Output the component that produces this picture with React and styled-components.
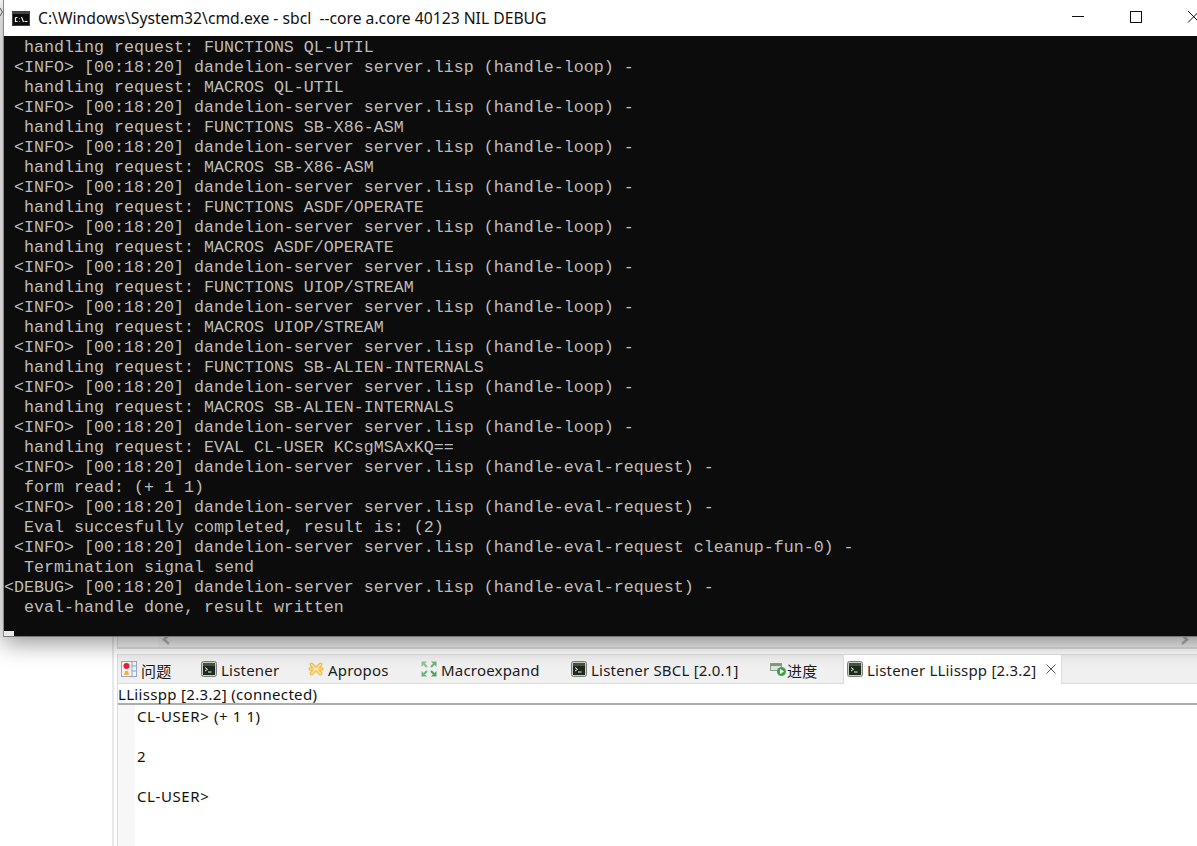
import React from "react";
import styled, { createGlobalStyle } from "styled-components";

const Global = createGlobalStyle`
  html, body { margin: 0; padding: 0; background: #fff; }
  body { font-family: "Noto Sans", "Noto Sans CJK SC", sans-serif; overflow: hidden; }
`;

const Desktop = styled.div`
  position: relative;
  width: 1197px;
  height: 846px;
  overflow: hidden;
  background: #fff;
  display: flex;
`;
const Gutter = styled.div`
  width: 112px;
  flex: none;
  border-right: 2px solid #e8e8e8;
`;
const Workbench = styled.div`
  flex: 1;
  min-width: 0;
  margin-left: 3px;
  display: flex;
  flex-direction: column;
`;
const TopPane = styled.div`
  height: 649px;
  flex: none;
  box-sizing: border-box;
  border-left: 1px solid #dcdcdc;
  border-bottom: 2px solid #dedede;
  background: linear-gradient(90deg, #f6f6f6 0 40px, #f0f0f0 40px);
  display: flex;
  align-items: flex-end;
  justify-content: space-between;
  padding: 0 8px 2px 44px;
  color: #b5b5b5;
`;
const Folder = styled.div`
  margin-top: 5px;
  flex: 1;
  display: flex;
  flex-direction: column;
  border-left: 1px solid #dcdcdc;
`;
const TabBar = styled.div`
  display: flex;
  height: 30px;
  box-sizing: border-box;
  background: #f0f0f0;
  border-top: 1px solid #e2e2e2;
  border-bottom: 1px solid #dcdcdc;
`;
const Tab = styled.div`
  display: flex;
  align-items: center;
  box-sizing: border-box;
  width: ${(p) => p.$w}px;
  height: ${(p) => (p.$active ? 29 : 28)}px;
  padding-left: ${(p) => p.$pad}px;
  gap: ${(p) => p.$gap}px;
  font-size: 15px;
  letter-spacing: 0.2px;
  color: #1c1c1c;
  white-space: nowrap;
  ${(p) =>
    p.$active &&
    `background:#fff; padding-bottom:1px; border-left:1px solid #dcdcdc; border-right:1px solid #dcdcdc; z-index:1;`}
`;
const TabLabel = styled.span`
  position: relative;
  top: 1px;
`;
const TabIcon = styled.svg`
  width: 16px;
  height: 16px;
  flex: none;
`;
const CloseBox = styled.svg`
  width: 10px;
  height: 10px;
  margin-left: 6px;
  flex: none;
`;
const Status = styled.div`
  height: 21px;
  box-sizing: border-box;
  border-bottom: 2px solid #acacac;
  font-size: 15px;
  letter-spacing: 0.32px;
  line-height: 20px;
  color: #111;
  white-space: nowrap;
`;
const ReplArea = styled.div`
  flex: 1;
  display: flex;
`;
const Ruler = styled.div`
  width: 17px;
  flex: none;
  background: #f7f7f7;
`;
const Repl = styled.div`
  padding: 1px 0 0 2px;
  font-size: 15px;
  letter-spacing: 0.6px;
  line-height: 20px;
  color: #111;
  white-space: pre;
`;

const TermWindow = styled.div`
  position: absolute;
  left: 3px;
  top: 0;
  width: 1221px;
  height: 637px;
  box-sizing: border-box;
  border-left: 1px solid #8a8a8a;
  border-bottom: 1px solid #777;
  background: #0c0c0c;
  box-shadow: 0 6px 22px rgba(0, 0, 0, 0.42);
  display: flex;
  flex-direction: column;
`;
const TitleBar = styled.div`
  height: 36px;
  flex: none;
  background: #fff;
  display: flex;
  align-items: center;
  padding-left: 8px;
  font-size: 15.7px;
  color: #111;
  white-space: pre;
`;
const AppIcon = styled.svg`
  width: 18px;
  height: 15px;
  margin-right: 8px;
  flex: none;
`;
const WinButtons = styled.div`
  margin-left: auto;
  display: flex;
`;
const WinButton = styled.svg`
  width: 58px;
  height: 36px;
  flex: none;
`;
const Console = styled.pre`
  margin: 0;
  padding: 2px 0 0;
  font-family: "Liberation Mono", monospace;
  font-size: 16.67px;
  line-height: 20px;
  color: #bcbcbc;
  position: relative;
  flex: 1;
`;
const Cursor = styled.span`
  position: absolute;
  left: 0;
  bottom: 0;
  width: 10px;
  height: 5px;
  background: #e8e8e8;
`;
const EdgeMark = styled.svg`
  position: absolute;
  left: 0;
  top: 8px;
  width: 3px;
  height: 8px;
`;

const info = (s) => ` <INFO> [00:18:20] dandelion-server server.lisp (${s}) -`;
const loop = info("handle-loop");
const evalReq = info("handle-eval-request");
const requests = [
  "FUNCTIONS QL-UTIL",
  "MACROS QL-UTIL",
  "FUNCTIONS SB-X86-ASM",
  "MACROS SB-X86-ASM",
  "FUNCTIONS ASDF/OPERATE",
  "MACROS ASDF/OPERATE",
  "FUNCTIONS UIOP/STREAM",
  "MACROS UIOP/STREAM",
  "FUNCTIONS SB-ALIEN-INTERNALS",
  "MACROS SB-ALIEN-INTERNALS",
  "EVAL CL-USER KCsgMSAxKQ==",
];
const allLines = [
  requests.map((r) => `  handling request: ${r}`).join(`\n${loop}\n`),
  evalReq,
  "  form read: (+ 1 1)",
  evalReq,
  "  Eval succesfully completed, result is: (2)",
  info("handle-eval-request cleanup-fun-0"),
  "  Termination signal send",
  "<DEBUG> [00:18:20] dandelion-server server.lisp (handle-eval-request) -",
  "  eval-handle done, result written",
].join("\n");

const ConsoleGlyph = () => (
  <TabIcon viewBox="0 0 16 16">
    <rect x="0.5" y="0.5" width="15" height="15" rx="2" fill="#c9cdc6" stroke="#7d807b" />
    <rect x="2" y="2" width="12" height="12" fill="#1e2a1c" />
    <rect x="2" y="2" width="12" height="3" fill="#46543f" />
    <path d="M4 6.500l2.500 1.800L4 10" fill="none" stroke="#e8efe2" strokeWidth="1" />
    <path d="M7 11h3.500" stroke="#e8efe2" strokeWidth="1" />
  </TabIcon>
);
const ProblemsGlyph = () => (
  <TabIcon viewBox="0 0 16 16">
    <rect x="0.500" y="0.500" width="15" height="15" fill="#f4f4f8" stroke="#9aa6c4" />
    <path d="M11 1v14M11 5h4M11 10h4" stroke="#8ea0c8" />
    <circle cx="5.500" cy="5" r="3" fill="#e0262a" />
    <path d="M3 14l1-4h3l1 4z" fill="#f2b23c" />
  </TabIcon>
);
const AproposGlyph = () => (
  <TabIcon viewBox="0 0 16 16">
    <g stroke="#f0c04c" strokeWidth="4" strokeLinecap="round">
      <path d="M3.500 3.500l9 9M12.500 3.500l-9 9M2.500 8h11" />
    </g>
    <g stroke="#fdeab0" strokeWidth="1.200" strokeLinecap="round">
      <path d="M3.500 3.500l9 9M12.500 3.500l-9 9M2.500 8h11" />
    </g>
  </TabIcon>
);
const MacroGlyph = () => (
  <TabIcon viewBox="0 0 16 16">
    <g fill="none" strokeWidth="2.200">
      <path d="M6 6L3 3" stroke="#8cc496" />
      <path d="M10 6l3-3" stroke="#6db57a" />
      <path d="M6 10l-3 3" stroke="#6db57a" />
      <path d="M10 10l3 3" stroke="#4fa161" />
    </g>
    <path d="M0.500 0.500H6L0.500 6z" fill="#8cc496" />
    <path d="M15.500 0.500H10L15.500 6z" fill="#6db57a" />
    <path d="M0.500 15.500H6L0.500 10z" fill="#6db57a" />
    <path d="M15.500 15.500H10L15.500 10z" fill="#4fa161" />
  </TabIcon>
);
const ProgressGlyph = () => (
  <TabIcon viewBox="0 0 16 16">
    <rect x="0.500" y="2.500" width="11" height="7" fill="#dfe5dc" stroke="#8f9a8c" />
    <rect x="1" y="3" width="10" height="2" fill="#7c9a7c" />
    <circle cx="11.500" cy="10.500" r="4.500" fill="#3fa34d" />
    <path d="M10 8l4 2.500-4 2.500z" fill="#fff" />
  </TabIcon>
);

export default function App() {
  return (
    <Desktop>
      <Global />
      <Gutter />
      <Workbench>
        <TopPane>
          <svg width="9" height="11" viewBox="0 0 9 11">
            <path d="M7 1L2 5.500 7 10" fill="none" stroke="currentColor" strokeWidth="2.500" />
          </svg>
          <svg width="9" height="11" viewBox="0 0 9 11">
            <path d="M2 1l5 4.500L2 10" fill="none" stroke="currentColor" strokeWidth="2.500" />
          </svg>
        </TopPane>
        <Folder>
          <TabBar>
            <Tab $w={83} $pad={3} $gap={4}><ProblemsGlyph /><TabLabel>问题</TabLabel></Tab>
            <Tab $w={107} $pad={0} $gap={4}><ConsoleGlyph /><TabLabel>Listener</TabLabel></Tab>
            <Tab $w={113} $pad={0} $gap={4}><AproposGlyph /><TabLabel>Apropos</TabLabel></Tab>
            <Tab $w={150} $pad={0} $gap={4}><MacroGlyph /><TabLabel>Macroexpand</TabLabel></Tab>
            <Tab $w={199} $pad={0} $gap={4}><ConsoleGlyph /><TabLabel>Listener SBCL [2.0.1]</TabLabel></Tab>
            <Tab $w={73} $pad={0} $gap={1}><ProgressGlyph /><TabLabel>进度</TabLabel></Tab>
            <Tab $active $w={219} $pad={3} $gap={4}>
              <ConsoleGlyph /><TabLabel>Listener LLiisspp [2.3.2]</TabLabel>
              <CloseBox viewBox="0 0 10 10">
                <path d="M0.500 0.500l9 9M9.500 0.500l-9 9" stroke="#555" strokeWidth="1" />
              </CloseBox>
            </Tab>
          </TabBar>
          <Status>LLiisspp [2.3.2] (connected)</Status>
          <ReplArea>
            <Ruler />
            <Repl>{"CL-USER> (+ 1 1)\n\n2\n\nCL-USER>"}</Repl>
          </ReplArea>
        </Folder>
      </Workbench>

      <EdgeMark viewBox="0 0 3 8">
        <path d="M0 0l2.500 4L0 8" fill="none" stroke="#666" />
      </EdgeMark>
      <TermWindow>
        <TitleBar>
          <AppIcon viewBox="0 0 18 15">
            <rect width="18" height="15" fill="#444" />
            <rect x="1" y="3" width="16" height="11" fill="#0c0c0c" />
            <path d="M3.500 6.500h2M3.500 6.500v4h2M7.500 7v.5M7.500 10v.5M9.500 6l2 5M12.500 10.500h3" stroke="#f2f2f2" strokeWidth="1.200" fill="none" />
          </AppIcon>
          {"C:\\Windows\\System32\\cmd.exe - sbcl  --core a.core 40123 NIL DEBUG"}
          <WinButtons>
            <WinButton viewBox="0 0 58 36">
              <path d="M22 16.500h12" stroke="#111" />
            </WinButton>
            <WinButton viewBox="0 0 58 36">
              <rect x="22.500" y="11.500" width="11" height="11" fill="none" stroke="#111" />
            </WinButton>
            <WinButton viewBox="0 0 58 36">
              <path d="M22 11l11.500 11.500M33.500 11L22 22.500" fill="none" stroke="#111" />
            </WinButton>
          </WinButtons>
        </TitleBar>
        <Console>
          {allLines}
          <Cursor />
        </Console>
      </TermWindow>
    </Desktop>
  );
}
